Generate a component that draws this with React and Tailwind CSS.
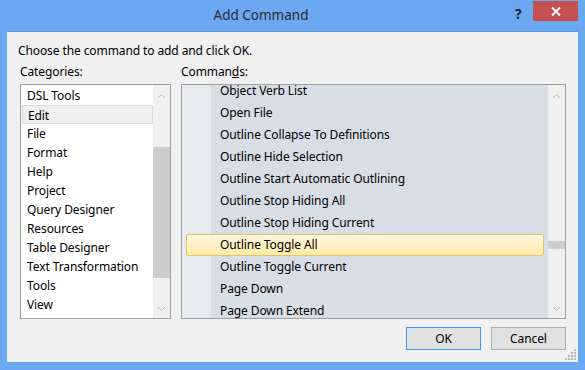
import React from 'react';

const categories = [
  'DSL Tools',
  'Edit',
  'File',
  'Format',
  'Help',
  'Project',
  'Query Designer',
  'Resources',
  'Table Designer',
  'Text Transformation',
  'Tools',
  'View',
];

const commands = [
  'Object Verb List',
  'Open File',
  'Outline Collapse To Definitions',
  'Outline Hide Selection',
  'Outline Start Automatic Outlining',
  'Outline Stop Hiding All',
  'Outline Stop Hiding Current',
  'Outline Toggle All',
  'Outline Toggle Current',
  'Page Down',
  'Page Down Extend',
];

const Chevron = ({ down }) => (
  <svg width="9" height="6" viewBox="0 0 9 6" className="block">
    <path
      d={down ? 'M1 1 L4.5 4.5 L8 1' : 'M1 5 L4.5 1.5 L8 5'}
      fill="none"
      stroke="#b8b8b8"
      strokeWidth="1"
    />
  </svg>
);

// vertical scrollbar, thumb placed by top/height
const ScrollBar = ({ thumbTop, thumbHeight }) => (
  <div className="relative w-[17px] h-full bg-[#f0f0f0] shrink-0">
    <div className="absolute left-0 right-0 top-[8px] flex justify-center">
      <Chevron />
    </div>
    <div
      className="absolute left-0 right-0 bg-[#cdcdcd]"
      style={{ top: thumbTop, height: thumbHeight }}
    />
    <div className="absolute left-0 right-0 bottom-[6px] flex justify-center">
      <Chevron down />
    </div>
  </div>
);

export default function App() {
  return (
    <div
      className="w-[585px] h-[370px] bg-[#6ba8f2] flex flex-col text-[12px] text-black tracking-[-0.1px]"
      style={{ fontFamily: '"Noto Sans", "Liberation Sans", sans-serif' }}
    >
      {/* title bar */}
      <div className="relative h-[31px] shrink-0 flex items-center justify-center pr-[63px]">
        <span className="text-[13.5px] text-[#2b2b2b] -mt-[1px] tracking-normal">Add Command</span>
        <span className="absolute left-[515px] top-[3px] text-[14px] font-bold text-[#222]">?</span>
        <div className="absolute left-[533px] top-[1px] w-[45px] h-[20px] bg-[#c75050] flex items-center justify-center">
          <svg width="10" height="9" viewBox="0 0 10 9">
            <path d="M1 0.5 L9 8.5 M9 0.5 L1 8.5" stroke="#fff" strokeWidth="2" />
          </svg>
        </div>
      </div>

      {/* client area */}
      <div className="relative mx-[7px] mb-[8px] flex-1 bg-[#f0f0f0] border-t border-[#5d95d8] flex flex-col">
        <div className="pl-[11px] pt-[11px] leading-[16px]">Choose the command to add and click OK.</div>

        <div className="flex gap-[10px] pl-[13px] mt-[5px]">
          {/* categories */}
          <div className="flex flex-col">
            <div className="leading-[16px] mb-[4px]">Categories:</div>
            <div className="w-[151px] h-[235px] border border-[#a0a0a0] bg-white flex overflow-hidden">
              <div className="flex-1 pt-[1px] pl-[1px]">
                {categories.map((c) => (
                  <div
                    key={c}
                    className={
                      'h-[19px] leading-[19px] pl-[5px] ' +
                      (c === 'Edit' ? 'bg-[#f0f0f0] border border-[#dadada] leading-[17px] pl-[4px]' : '')
                    }
                  >
                    {c}
                  </div>
                ))}
              </div>
              <ScrollBar thumbTop={62} thumbHeight={131} />
            </div>
          </div>

          {/* commands */}
          <div className="flex flex-col">
            <div className="leading-[16px] mb-[4px]">
              Comman<span className="underline">d</span>s:
            </div>
            <div className="w-[385px] h-[235px] border border-[#a0a0a0] bg-white flex overflow-hidden">
              <div className="flex-1 overflow-hidden bg-[linear-gradient(to_right,#e6e9ee_29px,#d8dee6_29px)]">
                <div className="-mt-[5px]">
                  {commands.map((c) =>
                    c === 'Outline Toggle All' ? (
                      <div
                        key={c}
                        className="h-[22px] ml-[4px] mr-[4px] pl-[33px] leading-[20px] rounded-[2px] border border-[#e5c365] bg-[linear-gradient(to_bottom,#fff8e0,#ffe9a8)]"
                      >
                        {c}
                      </div>
                    ) : (
                      <div key={c} className="h-[22px] leading-[22px] pl-[38px]">
                        {c}
                      </div>
                    )
                  )}
                </div>
              </div>
              <ScrollBar thumbTop={156} thumbHeight={8} />
            </div>
          </div>
        </div>

        {/* buttons */}
        <div className="flex justify-end gap-[10px] pr-[12px] mt-[8px]">
          <button className="w-[75px] h-[23px] border border-[#3399ff] bg-[#e1e1e1] leading-[21px]">OK</button>
          <button className="w-[75px] h-[23px] border border-[#adadad] bg-[#e1e1e1] leading-[21px]">Cancel</button>
        </div>

        {/* size grip */}
        <svg className="absolute right-[2px] bottom-[2px]" width="11" height="11" viewBox="0 0 11 11">
          {[
            [9, 1], [9, 4], [6, 4], [9, 7], [6, 7], [3, 7], [9, 10], [6, 10], [3, 10], [0, 10],
          ].map(([x, y]) => (
            <rect key={x + '-' + y} x={x} y={y - 1} width="2" height="2" fill="#b8b8b8" />
          ))}
        </svg>
      </div>
    </div>
  );
}
